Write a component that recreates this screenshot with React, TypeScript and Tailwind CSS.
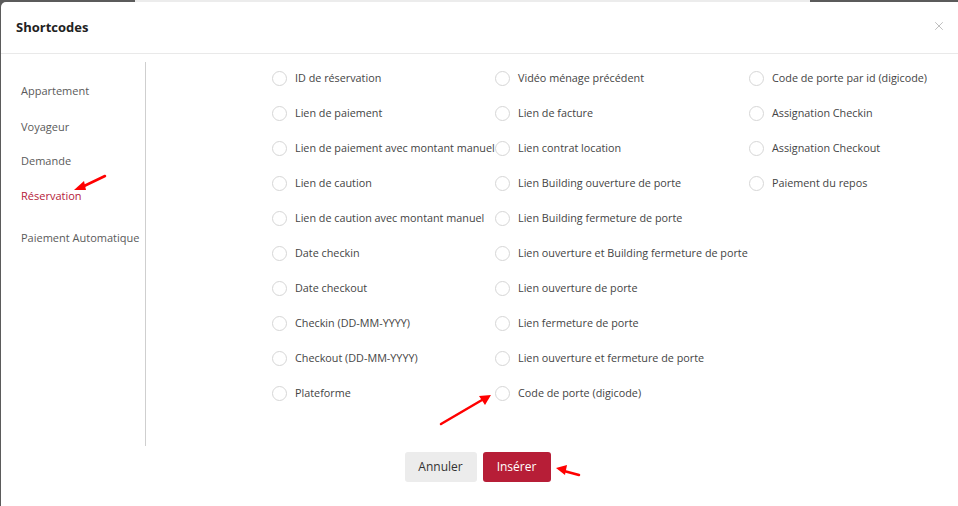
import { X } from "lucide-react";

const col1 = [
  "ID de réservation",
  "Lien de paiement",
  "Lien de paiement avec montant manuel",
  "Lien de caution",
  "Lien de caution avec montant manuel",
  "Date checkin",
  "Date checkout",
  "Checkin (DD-MM-YYYY)",
  "Checkout (DD-MM-YYYY)",
  "Plateforme",
];
const col2 = [
  "Vidéo ménage précédent",
  "Lien de facture",
  "Lien contrat location",
  "Lien Building ouverture de porte",
  "Lien Building fermeture de porte",
  "Lien ouverture et Building fermeture de porte",
  "Lien ouverture de porte",
  "Lien fermeture de porte",
  "Lien ouverture et fermeture de porte",
  "Code de porte (digicode)",
];
const col3 = [
  "Code de porte par id (digicode)",
  "Assignation Checkin",
  "Assignation Checkout",
  "Paiement du repos",
];

function Radio({ label }: { label: string }) {
  return (
    <label className="flex items-center h-[35px] whitespace-nowrap cursor-pointer">
      <span className="w-[15px] h-[15px] rounded-full border border-[#d6d6d6] bg-white shrink-0" />
      <span className="ml-[8px] text-[10.8px] text-[#444]">{label}</span>
    </label>
  );
}

function Column({ items, width }: { items: string[]; width: string }) {
  return (
    <div className={`flex flex-col ${width}`}>
      {items.map((l) => (
        <Radio key={l} label={l} />
      ))}
    </div>
  );
}

export default function App() {
  return (
    <div
      className="relative w-[958px] h-[506px] overflow-hidden bg-[#5b5b5b] flex flex-col"
      style={{ fontFamily: '"Open Sans", "Liberation Sans", sans-serif' }}
    >
      {/* backdrop strip */}
      <div className="h-[2px] flex shrink-0">
        <div className="w-[135px] bg-[#5b5b5b]" />
        <div className="w-[675px] bg-[#ececec]" />
        <div className="flex-1 bg-[#5b5b5b]" />
      </div>

      <div className="flex-1 ml-[1px] bg-white rounded-tl-[5px] flex flex-col">
        {/* header */}
        <div className="h-[52px] flex items-center justify-between pl-[15px] pr-[12px] border-b border-[#e9e9e9]">
          <h2 className="text-[13px] font-bold text-[#222]">Shortcodes</h2>
          <X className="w-[14px] h-[14px] text-[#b0b0b0] -mt-[3px]" strokeWidth={1.4} />
        </div>

        {/* body */}
        <div className="flex">
          <div className="w-[145px] mt-[8px] h-[384px] border-r border-[#cfcfcf] pt-[21px] pl-[20px] flex flex-col text-[11px] text-[#5a5a5a]">
            <div className="h-4 leading-4">Appartement</div>
            <div className="h-4 leading-4 mt-[20px]">Voyageur</div>
            <div className="h-4 leading-4 mt-[18px]">Demande</div>
            <div className="h-4 leading-4 mt-[19px] text-[#b5203a]">Réservation</div>
            <div className="h-4 leading-4 mt-[26px]">Paiement Automatique</div>
          </div>

          <div className="flex pl-[126px] pt-[6.5px]">
            <Column items={col1} width="w-[223px]" />
            <Column items={col2} width="w-[254px]" />
            <Column items={col3} width="w-auto" />
          </div>
        </div>

        {/* footer */}
        <div className="flex justify-center gap-[6px] mt-[6px] pr-[4px]">
          <button className="h-[30px] w-[72px] rounded-[3px] bg-[#ececec] text-[12px] text-[#333]">
            Annuler
          </button>
          <button className="h-[30px] w-[68px] rounded-[3px] bg-[#b71e37] text-[12px] text-white">
            Insérer
          </button>
        </div>
      </div>

      {/* annotation arrows */}
      <svg className="absolute inset-0 pointer-events-none" width="958" height="506">
        <g stroke="#f00" strokeWidth="2.5" fill="#f00" strokeLinecap="round">
          <line x1="105" y1="176" x2="82" y2="187" />
          <polygon points="74,190 84,181 86,190" stroke="none" />
          <line x1="441" y1="424" x2="482" y2="400" />
          <polygon points="491,395 479,396 485,405" stroke="none" />
          <line x1="579" y1="475" x2="564" y2="471" />
          <polygon points="556,468 567,465 565,475" stroke="none" />
        </g>
      </svg>
    </div>
  );
}
